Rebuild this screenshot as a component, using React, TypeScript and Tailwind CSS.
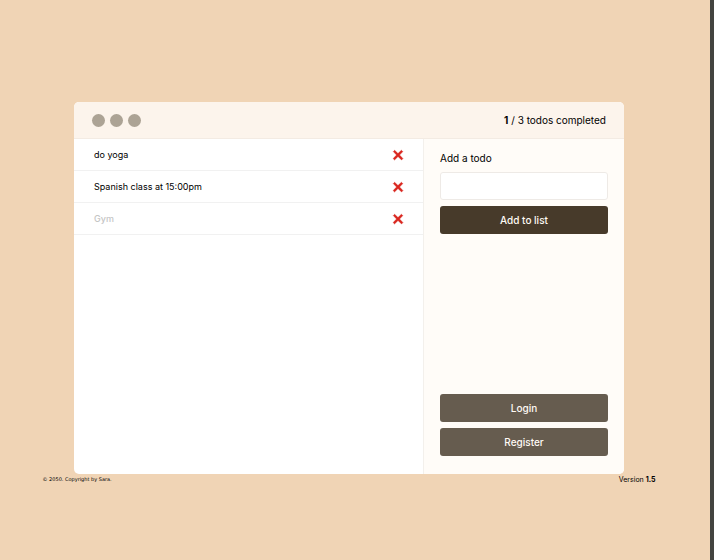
import { useState } from "react";

type Todo = { id: number; text: string; done: boolean };

const initialTodos: Todo[] = [
  { id: 1, text: "do yoga", done: false },
  { id: 2, text: "Spanish class at 15:00pm", done: false },
  { id: 3, text: "Gym", done: true },
];

function CrossIcon() {
  return (
    <svg viewBox="0 0 12 12" className="size-3" aria-hidden="true">
      <path
        d="M1.3 2.6 L2.6 1.3 L6 4.6 L9.4 1.3 L10.8 2.6 L7.5 6 L10.9 9.6 L9.6 10.9 L6 7.5 L2.5 10.9 L1.2 9.6 L4.6 6 Z"
        fill="#d9251d"
        stroke="#d9251d"
        strokeWidth="0.5"
        strokeLinejoin="round"
      />
    </svg>
  );
}

export default function App() {
  const [todos, setTodos] = useState(initialTodos);
  const [text, setText] = useState("");
  const completed = todos.filter((t) => t.done).length;

  const buttonClass =
    "h-7 w-full rounded-[3px] text-[10px] leading-4 font-medium text-[#fffaf5]";

  return (
    <div className="min-h-screen border-r-4 border-[#434440] bg-[#f0d4b5] pt-[102px] pr-3 font-['Inter',sans-serif] text-black">
      <main className="mx-auto grid min-h-[372px] w-full max-w-[550px] grid-cols-[1fr_201px] grid-rows-[auto_1fr] overflow-hidden rounded-[5px] bg-white">
        <header className="col-span-2 flex h-[37px] items-center justify-between border-b border-[#f3ebe3] bg-[#fcf4ec] px-[18px]">
          <div className="flex gap-[5px]">
            <span className="size-[13px] rounded-full bg-[#aca395]" />
            <span className="size-[13px] rounded-full bg-[#aca395]" />
            <span className="size-[13px] rounded-full bg-[#aca395]" />
          </div>
          <p className="text-[10px] leading-4">
            <b>{completed}</b> / {todos.length} todos completed
          </p>
        </header>

        <ul>
          {todos.map((todo) => (
            <li
              key={todo.id}
              className="flex h-8 items-center justify-between border-b border-[#f1f1f1] pr-[19px] pl-5 text-[9px] leading-4"
            >
              <span className={todo.done ? "font-medium text-[#c5c5c5]" : ""}>
                {todo.text}
              </span>
              <button
                type="button"
                aria-label={"Delete " + todo.text}
                onClick={() => setTodos(todos.filter((t) => t.id !== todo.id))}
              >
                <CrossIcon />
              </button>
            </li>
          ))}
        </ul>

        <aside className="flex flex-col justify-between border-l border-[#f3f0ec] bg-[#fffcf8] px-4 pt-[11px] pb-[18px]">
          <form
            onSubmit={(e) => {
              e.preventDefault();
              if (!text.trim()) return;
              setTodos([...todos, { id: Date.now(), text, done: false }]);
              setText("");
            }}
          >
            <label htmlFor="todo" className="block text-[10px] leading-4">
              Add a todo
            </label>
            <input
              id="todo"
              value={text}
              onChange={(e) => setText(e.target.value)}
              className="mt-[6px] mb-[6px] block h-7 w-full rounded-[3px] border border-[#eeeae6] bg-white px-2 text-[10px]"
            />
            <button type="submit" className={buttonClass + " bg-[#473a2a]"}>
              Add to list
            </button>
          </form>
          <div className="flex flex-col gap-[6px]">
            <button type="button" className={buttonClass + " bg-[#665c4f]"}>
              Login
            </button>
            <button type="button" className={buttonClass + " bg-[#665c4f]"}>
              Register
            </button>
          </div>
        </aside>
      </main>

      <footer className="mx-auto flex w-full max-w-[613px] justify-between leading-[11px]">
        <small className="font-['DejaVu_Sans',sans-serif] text-[5px]">
          © 2050. Copyright by Sara.
        </small>
        <p className="text-[7px]">
          Version <b>1.5</b>
        </p>
      </footer>
    </div>
  );
}
